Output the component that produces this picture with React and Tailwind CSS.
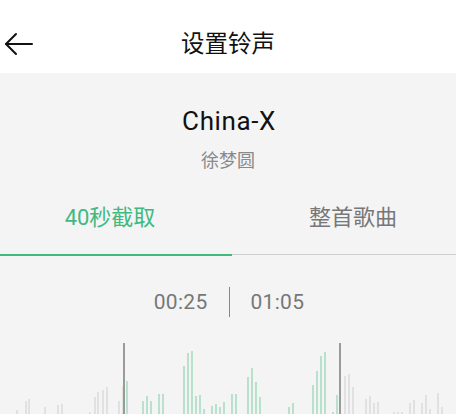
import { useState } from 'react';

const BARS = [
  [17, 411], [26, 402], [29, 400], [45, 408], [58, 406], [62, 405], [90, 413], [95, 398], [98, 393],
  [103, 391], [107, 388], [119, 402], [123, 387], [127, 382], [143, 402], [147, 397], [151, 402],
  [159, 395], [163, 395], [184, 367], [188, 354], [192, 352], [196, 397], [200, 396], [204, 410],
  [212, 407], [216, 405], [220, 408], [224, 403], [232, 395], [236, 395], [248, 378], [252, 369],
  [256, 383], [260, 398], [289, 408], [293, 404], [313, 386], [317, 372], [321, 357], [325, 353],
  [333, 413], [337, 396], [345, 377], [349, 375], [353, 388], [366, 400], [370, 397], [374, 404],
  [378, 403], [394, 413], [398, 413], [402, 413], [410, 404], [414, 401], [422, 404], [426, 396],
  [430, 410], [438, 394], [442, 408],
];

const START = 124;
const END = 340;
const TOP = 344;

function Waveform() {
  return (
    <svg width="456" height="90" viewBox="0 0 456 90" className="block">
      {BARS.map(([x, y]) => (
        <line
          key={x}
          x1={x}
          x2={x}
          y1={y - TOP}
          y2={90}
          stroke={x > START && x < END ? '#a9dcc4' : '#dcdcdc'}
          strokeWidth="1.6"
        />
      ))}
      <line x1={START} x2={START} y1={0} y2={90} stroke="#9a9a9a" strokeWidth="2" />
      <line x1={END} x2={END} y1={0} y2={90} stroke="#9a9a9a" strokeWidth="2" />
    </svg>
  );
}

export default function App() {
  const [tab, setTab] = useState(0);
  const cjk = { fontFamily: 'Roboto, "Noto Sans CJK SC", sans-serif' };

  return (
    <div className="w-[456px] h-[414px] overflow-hidden bg-[#f4f4f4]" style={cjk}>
      <div className="h-[73px] bg-white pt-[13px] grid grid-cols-[1fr_auto_1fr] items-center">
        <button className="pl-[4px] pt-[1px] w-fit">
          <svg width="30" height="24" viewBox="0 0 30 24" fill="none" stroke="#111" strokeWidth="2" strokeLinecap="round" strokeLinejoin="round">
            <path d="M2 12H28" />
            <path d="M12 2 2 12l10 10" />
          </svg>
        </button>
        <h1 className="text-[23.5px] leading-[30px] text-[#111] pt-[2px]">设置铃声</h1>
        <div />
      </div>

      <div className="flex flex-col items-center">
        <div className="mt-[33px] text-[26px] leading-[30px] tracking-[0.6px] text-[#111] pl-[2px]">China-X</div>
        <div className="mt-[13px] text-[18px] leading-[24px] text-[#8a8a8a]">徐梦圆</div>
      </div>

      <div className="mt-[31px] flex">
        <button onClick={() => setTab(0)} className={`w-[232px] pr-[12px] text-[22px] leading-[28px] ${tab === 0 ? 'text-[#3fba80]' : 'text-[#777]'}`}>40秒截取</button>
        <button onClick={() => setTab(1)} className={`flex-1 pl-[18px] text-[22px] leading-[28px] ${tab === 1 ? 'text-[#3fba80]' : 'text-[#777]'}`}>整首歌曲</button>
      </div>
      <div className="mt-[21px] flex items-center h-[3px]">
        <div className={`w-[232px] ${tab === 0 ? 'h-[2px] bg-[#3fba80]' : 'h-px bg-[#cfcfcf]'}`} />
        <div className={`flex-1 ${tab === 1 ? 'h-[2px] bg-[#3fba80]' : 'h-px bg-[#cfcfcf]'}`} />
      </div>

      <div className="mt-[31px] flex items-center justify-center gap-[21px] text-[21px] leading-[30px] tracking-[0.3px] text-[#777] pl-[2px]">
        <span>00:25</span>
        <span className="w-px h-[30px] bg-[#888]" />
        <span>01:05</span>
      </div>

      <div className="mt-[26px]">
        <Waveform />
      </div>
    </div>
  );
}
